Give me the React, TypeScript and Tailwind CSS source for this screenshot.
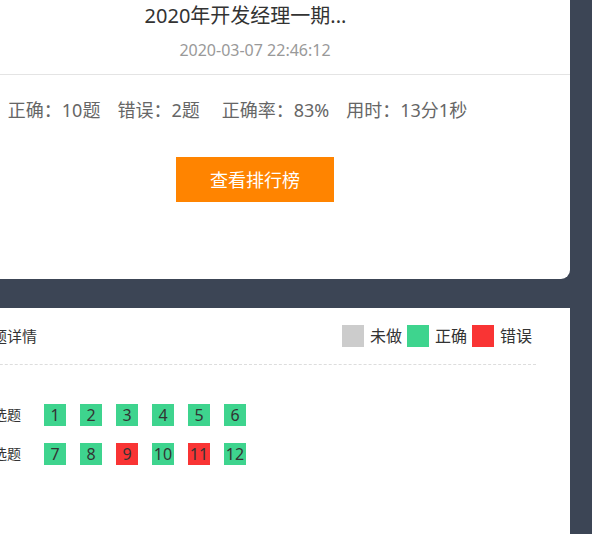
import React from "react";

type Status = "ok" | "bad" | "none";

const rows: { label: string; items: { n: number; s: Status }[] }[] = [
  {
    label: "单选题",
    items: [1, 2, 3, 4, 5, 6].map((n) => ({ n, s: "ok" as Status })),
  },
  {
    label: "多选题",
    items: [
      { n: 7, s: "ok" },
      { n: 8, s: "ok" },
      { n: 9, s: "bad" },
      { n: 10, s: "ok" },
      { n: 11, s: "bad" },
      { n: 12, s: "ok" },
    ],
  },
];

function Box({ n, s }: { n: number; s: Status }) {
  const bg =
    s === "ok" ? "bg-[#3ed48e]" : s === "bad" ? "bg-[#f93434]" : "bg-[#cccccc]";
  return (
    <div
      className={`${bg} w-[22px] h-[22px] flex items-center justify-center text-[16px] leading-[22px] text-[#333]`}
    >
      {n}
    </div>
  );
}

export default function App() {
  return (
    <div className="w-[592px] h-[534px] bg-[#3c4555] overflow-hidden font-[family-name:'Noto_Sans','Noto_Sans_CJK_SC',sans-serif]">
      <div className="ml-[-60px] w-[630px] h-full flex flex-col">
        {/* Result card */}
        <div className="bg-white rounded-b-[9px] flex flex-col items-center pb-[77px]">
          <div className="pt-[3px] pr-[19px] text-[20px] leading-[26px] text-[#333]">
            2020年开发经理一期...
          </div>
          <div className="mt-[11px] text-[16px] leading-[20px] text-[#999]">
            2020-03-07 22:46:12
          </div>
          <div className="self-stretch mt-[14px] h-px bg-[#e4e4e4]" />
          <div className="mt-[23px] pr-[35px] flex text-[18px] leading-[24px] text-[#666]">
            <span>正确：10题</span>
            <span className="ml-[17px]">错误：2题</span>
            <span className="ml-[22px]">正确率：83%</span>
            <span className="ml-[17px]">用时：13分1秒</span>
          </div>
          <button className="mt-[35px] w-[158px] h-[45px] bg-[#ff8400] text-white text-[18px] leading-[24px] flex items-center justify-center">
            查看排行榜
          </button>
        </div>

        {/* Detail card */}
        <div className="mt-[29px] flex-1 bg-white pr-[34px]">
          <div className="pt-[17px] pl-[37px] flex items-center justify-between">
            <div className="text-[15px] leading-[22px] text-[#333]">试题详情</div>
            <div className="flex items-center mr-[4px] text-[16px] leading-[22px] text-[#333]">
              <div className="w-[22px] h-[22px] bg-[#cccccc]" />
              <span className="ml-[6px]">未做</span>
              <div className="ml-[5px] w-[22px] h-[22px] bg-[#3ed48e]" />
              <span className="ml-[6px]">正确</span>
              <div className="ml-[5px] w-[22px] h-[22px] bg-[#f93434]" />
              <span className="ml-[6px]">错误</span>
            </div>
          </div>
          <div className="mt-[17px] border-t border-dashed border-[#dddddd]" />
          <div className="mt-[39px] flex flex-col gap-[17px]">
            {rows.map((r) => (
              <div key={r.label} className="flex items-center">
                <div className="w-[81px] text-right text-[14px] leading-[22px] text-[#333]">
                  {r.label}
                </div>
                <div className="ml-[23px] flex gap-[14px]">
                  {r.items.map((it) => (
                    <Box key={it.n} n={it.n} s={it.s} />
                  ))}
                </div>
              </div>
            ))}
          </div>
        </div>
      </div>
    </div>
  );
}
